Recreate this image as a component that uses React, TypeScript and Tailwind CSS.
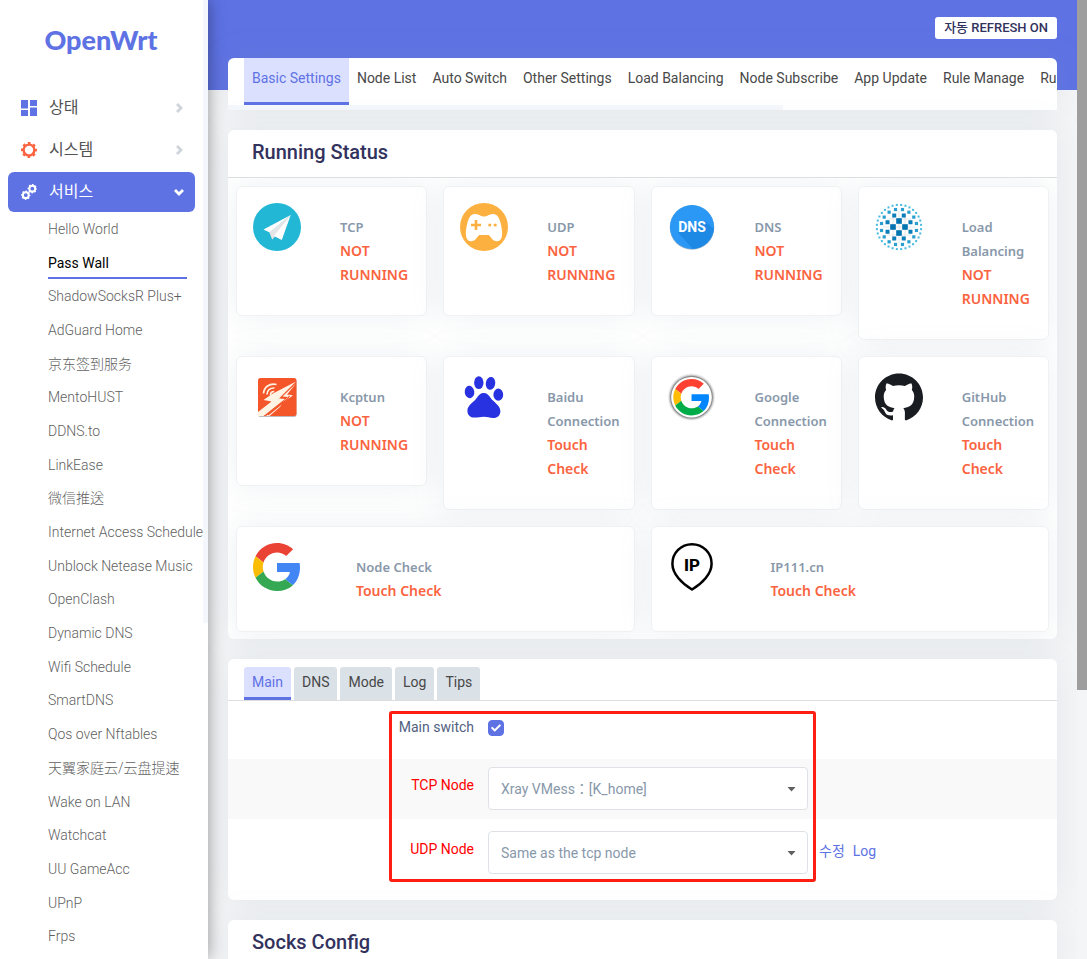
import { useState } from "react";
import type { ReactNode } from "react";
import clsx from "clsx";
import { FaCheck } from "react-icons/fa";
import { SiGithub } from "react-icons/si";

const services = [
  "Hello World",
  "Pass Wall",
  "ShadowSocksR Plus+",
  "AdGuard Home",
  "京东签到服务",
  "MentoHUST",
  "DDNS.to",
  "LinkEase",
  "微信推送",
  "Internet Access Schedule",
  "Unblock Netease Music",
  "OpenClash",
  "Dynamic DNS",
  "Wifi Schedule",
  "SmartDNS",
  "Qos over Nftables",
  "天翼家庭云/云盘提速",
  "Wake on LAN",
  "Watchcat",
  "UU GameAcc",
  "UPnP",
  "Frps",
];

const pages = [
  "Basic Settings",
  "Node List",
  "Auto Switch",
  "Other Settings",
  "Load Balancing",
  "Node Subscribe",
  "App Update",
  "Rule Manage",
  "Rule List",
];

const settingTabs = ["Main", "DNS", "Mode", "Log", "Tips"];

/* ---------- icons ---------- */

function DashboardIcon() {
  return (
    <svg width="16" height="16" viewBox="0 0 16 16" fill="#5e72e4">
      <path d="M0 0h7v8.500H0zM0 10h7v6H0zM9 0h7v6H9zM9 7.500h7V16H9z" />
    </svg>
  );
}

function GearIcon() {
  return (
    <svg width="16" height="16" viewBox="0 0 16 16" fill="none" stroke="#fb6340">
      <circle cx="8" cy="8" r="5.400" strokeWidth="2.400" />
      <circle cx="8" cy="8" r="7" strokeWidth="2" strokeDasharray="2.750 2.748" strokeDashoffset="1.370" />
    </svg>
  );
}

function CogsIcon() {
  return (
    <svg width="16" height="16" viewBox="0 0 16 16" fill="none" stroke="#fff">
      <circle cx="11.300" cy="4.700" r="2.900" strokeWidth="2" />
      <circle cx="11.300" cy="4.700" r="4" strokeWidth="1.400" strokeDasharray="1.570 1.571" strokeDashoffset=".780" />
      <circle cx="4.800" cy="11.200" r="2.900" strokeWidth="2" />
      <circle cx="4.800" cy="11.200" r="4" strokeWidth="1.400" strokeDasharray="1.570 1.571" strokeDashoffset=".780" />
    </svg>
  );
}

function Chevron({ down }: { down?: boolean }) {
  return (
    <svg
      width="10"
      height="10"
      viewBox="0 0 10 10"
      fill="none"
      stroke={down ? "#fff" : "#ced4da"}
      strokeWidth="2.800"
    >
      <path d={down ? "M1 3l4 4 4-4" : "M3 1l4 4-4 4"} />
    </svg>
  );
}

function TelegramIcon() {
  return (
    <svg width="48" height="48" viewBox="0 0 48 48">
      <circle cx="24" cy="24" r="24" fill="#23b7d6" />
      <path d="M37.700 12 16.500 29.500l2.700 7L22.500 33z" fill="#d3d6d8" />
      <path d="M37.700 12 10.500 26.500l6.200 3z" fill="#fff" />
      <path d="M37.700 12 16.700 29.500l2.600 6.800z" fill="#e3e5e7" />
      <path d="M37.700 12 21 33l7.800 4z" fill="#fff" />
    </svg>
  );
}

function GamepadIcon() {
  return (
    <svg width="48" height="48" viewBox="0 0 48 48">
      <circle cx="24" cy="24" r="24" fill="#fbb040" />
      <path
        d="M15.500 11C19 11 20.500 13.600 24 13.600S29 11 32.500 11c4 0 6.500 2.500 8 8.500 1.300 5 2 9.500 1.500 13.500-.5 3.500-2.500 5.200-5.200 5.200-4.300 0-5.300-3.700-8-6.200h-9.600c-2.700 2.500-3.700 6.200-8 6.200C8.500 38.200 6.500 36.500 6 33c-.5-4 .2-8.500 1.500-13.500 1.500-6 4-8.500 8-8.500z"
        fill="#fff"
      />
      <path d="M14.700 17h2.600v3.700H21v2.600h-3.700V27h-2.600v-3.700H11v-2.600h3.700z" fill="#fbb040" />
      <circle cx="29.800" cy="22" r="1.600" fill="#fbb040" />
      <circle cx="35.200" cy="22" r="1.600" fill="#fbb040" />
    </svg>
  );
}

function DnsIcon() {
  return (
    <svg width="48" height="48" viewBox="0 0 48 48">
      <circle cx="24" cy="24.500" r="22.300" fill="#9fb4c8" />
      <circle cx="24" cy="24" r="22" fill="#2a98f4" />
      <path d="M10 29.500 25 45.900A22 22 0 0 0 45.800 26L37 18z" fill="#1e88e5" />
      <text
        x="24"
        y="29"
        textAnchor="middle"
        fontFamily="Roboto, sans-serif"
        fontWeight="700"
        fontSize="14"
        fill="#fff"
      >
        DNS
      </text>
    </svg>
  );
}

const dotRings = [
  { count: 4, radius: 6, size: 5.6, turn: 0, color: "#0073b1" },
  { count: 8, radius: 12.4, size: 4, turn: 0.5, color: "#0a7dba" },
  { count: 16, radius: 17.8, size: 3.2, turn: 0.5, color: "#2a9fcf" },
  { count: 32, radius: 22.2, size: 2, turn: 0.5, color: "#43b9de" },
];

function BalanceIcon() {
  return (
    <svg width="48" height="48" viewBox="0 0 48 48">
      <path d="M8 24h32M24 8v32M12 16h24M12 32h24M18 10v28M30 10v28" stroke="#e3e6e9" strokeWidth="1" />
      {dotRings.map((ring) =>
        Array.from({ length: ring.count }, (_, i) => {
          const angle = ((i + ring.turn) / ring.count) * Math.PI * 2;
          return (
            <rect
              key={`${ring.count}-${i}`}
              x={24 + Math.cos(angle) * ring.radius - ring.size / 2}
              y={24 + Math.sin(angle) * ring.radius - ring.size / 2}
              width={ring.size}
              height={ring.size}
              fill={ring.color}
            />
          );
        }),
      )}
    </svg>
  );
}

function KcptunIcon() {
  return (
    <svg width="48" height="48" viewBox="0 0 48 48">
      <rect x="5" y="6" width="38.500" height="38" rx="2.500" fill="#b9bcc0" />
      <rect x="5" y="5" width="38.500" height="38" rx="2.500" fill="#f4562a" />
      <g fill="#fff3e3">
        <path d="M43 8.500 19 21l-8.500 6 8 1.500L5 39v4h5.500L32 26l-6-.5z" />
        <path d="M43 10.500 34 21.500l6 .8L13 43h3.500L27 34l4-6 4-4-5.500-.5z" />
      </g>
      <path d="M36.500 22.800 34.500 26 15 42" fill="none" stroke="#f4562a" strokeWidth="1.200" />
      <g fill="none" stroke="#fff3e3" strokeWidth="1.700">
        <path d="M10.500 20.500C11 14 16.500 10 23.500 11.500" />
        <path d="M14 21.500c0-4 3-6.800 7.500-6.500" />
        <path d="M17.500 22c0-2 1.500-3.500 3.700-3.500" />
      </g>
    </svg>
  );
}

function PawIcon() {
  return (
    <svg width="48" height="48" viewBox="0 0 48 48" fill="#2932e1">
      <ellipse cx="9.500" cy="19" rx="4.800" ry="6.200" transform="rotate(-8 9.500 19)" />
      <ellipse cx="18.800" cy="9.700" rx="4.700" ry="6.400" />
      <ellipse cx="30.500" cy="10.400" rx="4.700" ry="6.400" transform="rotate(10 30.500 10.400)" />
      <ellipse cx="38.300" cy="21.700" rx="4.900" ry="6.100" />
      <path d="M23.700 20c3.300 0 5 2 7 5 2.500 3.700 9.800 7.700 9.700 13.200-.1 4.300-3 6.900-7.400 6.800-3.500-.1-5.500-1.200-9.300-1.200-3.500 0-6 .9-9.500.8-4-.1-6.800-2.600-6.800-6.900 0-5.500 6.600-8.700 9.300-12.700 2-3 3.700-5 7-5z" />
    </svg>
  );
}

function GoogleMark({ vivid }: { vivid?: boolean }) {
  return (
    <>
      <path
        fill={vivid ? "#ff4131" : "#ea4335"}
        d="M24 9.500c3.540 0 6.710 1.220 9.210 3.600l6.850-6.850C35.900 2.380 30.470 0 24 0 14.620 0 6.510 5.380 2.560 13.220l7.980 6.190C12.430 13.720 17.740 9.500 24 9.500z"
      />
      <path
        fill={vivid ? "#0086ff" : "#4285f4"}
        d="M46.980 24.550c0-1.570-.15-3.090-.38-4.550H24v9.020h12.940c-.58 2.960-2.260 5.480-4.780 7.180l7.730 6c4.510-4.180 7.090-10.360 7.090-17.650z"
      />
      <path
        fill={vivid ? "#ffbd00" : "#fbbc05"}
        d="M10.530 28.590c-.48-1.450-.76-2.990-.76-4.590s.27-3.140.76-4.590l-7.980-6.190C.92 16.460 0 20.120 0 24c0 3.880.92 7.540 2.560 10.780l7.970-6.190z"
      />
      <path
        fill={vivid ? "#00ac47" : "#34a853"}
        d="M24 48c6.480 0 11.930-2.130 15.890-5.810l-7.730-6c-2.150 1.450-4.920 2.300-8.160 2.300-6.260 0-11.570-4.220-13.470-9.910l-7.980 6.190C6.510 42.620 14.620 48 24 48z"
      />
    </>
  );
}

function GoogleIcon() {
  return (
    <svg width="48" height="48" viewBox="0 0 48 48">
      <GoogleMark />
    </svg>
  );
}

function GoogleBadgeIcon() {
  return (
    <svg width="48" height="48" viewBox="0 0 48 48">
      <circle cx="23.500" cy="24" r="23.500" fill="#ececec" />
      <circle cx="23.500" cy="24.200" r="22.500" fill="#c9c9c9" />
      <circle cx="23.500" cy="24.200" r="21.400" fill="#8b8b8b" />
      <circle cx="23.500" cy="24.200" r="20.300" fill="#fff" />
      <g transform="translate(5.300 6) scale(.76)">
        <GoogleMark vivid />
      </g>
    </svg>
  );
}

function IpIcon() {
  return (
    <svg width="48" height="48" viewBox="0 0 48 48">
      <path
        d="M24 1.300c11 0 19.600 8.700 19.600 19.400C43.600 31 34 40.500 24 46.500 14 40.500 4.400 31 4.400 20.700 4.400 10 13 1.300 24 1.300z"
        fill="none"
        stroke="#000"
        strokeWidth="2.500"
      />
      <text
        x="24"
        y="28"
        textAnchor="middle"
        fontFamily="Roboto, sans-serif"
        fontWeight="800"
        fontSize="17"
        fill="#000"
      >
        IP
      </text>
    </svg>
  );
}

/* ---------- parts ---------- */

type Status = { name: string; state: string; icon: ReactNode; wide?: boolean };

const statuses: Status[] = [
  { name: "TCP", state: "NOT RUNNING", icon: <TelegramIcon /> },
  { name: "UDP", state: "NOT RUNNING", icon: <GamepadIcon /> },
  { name: "DNS", state: "NOT RUNNING", icon: <DnsIcon /> },
  { name: "Load Balancing", state: "NOT RUNNING", icon: <BalanceIcon /> },
  { name: "Kcptun", state: "NOT RUNNING", icon: <KcptunIcon /> },
  { name: "Baidu Connection", state: "Touch Check", icon: <PawIcon /> },
  { name: "Google Connection", state: "Touch Check", icon: <GoogleBadgeIcon /> },
  { name: "GitHub Connection", state: "Touch Check", icon: <SiGithub size={48} color="#191d21" /> },
  { name: "Node Check", state: "Touch Check", icon: <GoogleIcon />, wide: true },
  { name: "IP111.cn", state: "Touch Check", icon: <IpIcon />, wide: true },
];

function StatusCard({ name, state, icon, wide }: Status) {
  return (
    <div
      className={clsx(
        "flex items-start rounded-md border border-[#f0f1f2] bg-white p-4 shadow-[0_0_32px_rgba(136,152,170,0.15)]",
        wide ? "col-span-2 gap-[55px]" : "gap-[39px]",
      )}
    >
      <div className="shrink-0">{icon}</div>
      <div className="min-w-0 py-3 font-['Noto_Sans','Open_Sans',sans-serif] leading-6 font-semibold">
        <h4 className="text-[13px] leading-6 text-[#8898aa]">{name}</h4>
        <p className="text-sm leading-6 text-[#fb6340]">{state}</p>
      </div>
    </div>
  );
}

function Panel({ title, children }: { title?: string; children?: ReactNode }) {
  return (
    <section className="mb-5 rounded-md bg-white shadow-[0_0_32px_rgba(136,152,170,0.15)]">
      {title && (
        <h3 className="border-b border-[#dcdee0] px-6 pt-2 pb-[11px] text-xl leading-7 font-medium text-[#32325d]">
          {title}
        </h3>
      )}
      {children}
    </section>
  );
}

function NodeSelect({ id, options }: { id: string; options: string[] }) {
  return (
    <div className="relative w-80">
      <select
        id={id}
        className="h-[43px] w-full appearance-none rounded border border-[#dee2e6] bg-white px-3 text-sm text-[#8898aa]"
      >
        {options.map((option) => (
          <option key={option}>{option}</option>
        ))}
      </select>
      <svg
        className="pointer-events-none absolute top-5 right-3"
        width="9"
        height="5"
        viewBox="0 0 9 5"
        fill="#5f5f5f"
      >
        <path d="M.5 0h8l-4 4.500z" />
      </svg>
    </div>
  );
}

function Sidebar() {
  const [active, setActive] = useState("Pass Wall");

  return (
    <aside className="relative z-10 flex w-52 shrink-0 flex-col overflow-hidden bg-white pb-1.5 shadow-[0_0_16px_rgba(0,0,0,0.4)]">
      <a
        href="#"
        className="pt-5 pr-1.5 pb-7 text-center font-['Lato',sans-serif] text-[27px] leading-10 font-black text-[#5e72e4]"
      >
        OpenWrt
      </a>
      <nav className="flex min-h-0 flex-1 flex-col">
        <div className="mr-[13px] ml-2 flex flex-col gap-0.5 text-base text-[#525252]">
          <a href="#" className="flex h-10 items-center gap-3 pr-[11px] pl-[13px]">
            <DashboardIcon />
            <span className="flex-1">상태</span>
            <Chevron />
          </a>
          <a href="#" className="flex h-10 items-center gap-3 pr-[11px] pl-[13px]">
            <GearIcon />
            <span className="flex-1">시스템</span>
            <Chevron />
          </a>
          <a href="#" className="flex h-10 items-center gap-3 rounded-md bg-[#5e72e4] pr-[11px] pl-[13px] text-white">
            <CogsIcon />
            <span className="flex-1">서비스</span>
            <Chevron down />
          </a>
        </div>
        <ul className="mr-[21px] ml-12 flex min-h-0 flex-1 flex-col text-sm text-[#5f5f5f]">
          {services.map((name) => (
            <li key={name} className="min-h-0 flex-1">
              <a
                href="#"
                onClick={() => setActive(name)}
                className={clsx(
                  "flex h-full items-center whitespace-nowrap",
                  name === active
                    ? "text-black shadow-[inset_0_-2px_0_#5e72e4]"
                    : "font-light",
                )}
              >
                {name}
              </a>
            </li>
          ))}
        </ul>
      </nav>
      {/* scroll thumb */}
      <div className="absolute top-0 right-0 h-[65%] w-[5px] bg-[#f4f7fb]" />
    </aside>
  );
}

export default function App() {
  const [page, setPage] = useState("Basic Settings");
  const [tab, setTab] = useState("Main");
  const [enabled, setEnabled] = useState(true);

  return (
    <div className="flex h-screen overflow-hidden bg-[#f4f5f7] font-['Roboto','Noto_Sans_CJK_KR','Noto_Sans_CJK_SC',sans-serif]">
      <Sidebar />

      <main className="min-w-0 flex-1 overflow-hidden bg-[linear-gradient(#5e72e4_90px,#f4f5f7_90px)] px-5">
        <header className="flex h-[58px] items-start justify-end pt-[17px]">
          <button className="h-[22px] rounded-[3px] bg-white px-[9px] text-[13px] leading-[22px] font-medium text-[#32325d]">
            자동 REFRESH ON
          </button>
        </header>

        <nav className="mb-5 overflow-hidden rounded-t-md bg-white shadow-[0_0_32px_rgba(136,152,170,0.15)]">
          <div className="flex pl-4">
            {pages.map((name) => (
              <a
                key={name}
                href="#"
                onClick={() => setPage(name)}
                className={clsx(
                  "h-[47px] shrink-0 border-b-3 px-2 pt-2 text-sm leading-6 whitespace-nowrap",
                  name === page
                    ? "border-[#5e72e4] bg-[#dce0ff] text-[#5e72e4]"
                    : "border-transparent text-[#484848]",
                )}
              >
                {name}
              </a>
            ))}
          </div>
          <div className="h-[5px] w-[67%] bg-[#f4f7fb]" />
        </nav>

        <Panel title="Running Status">
          <div className="grid grid-cols-4 items-start gap-4 overflow-hidden rounded-b-md p-2 pb-[7px]">
            {statuses.map((status) => (
              <StatusCard key={status.name} {...status} />
            ))}
          </div>
        </Panel>

        <Panel>
          <div className="flex gap-[3px] border-b border-[#dcdee0] px-4 pt-2">
            {settingTabs.map((name) => (
              <button
                key={name}
                onClick={() => setTab(name)}
                className={clsx(
                  "h-[33px] rounded-t-[3px] border-b-3 px-2 text-sm leading-7",
                  name === tab
                    ? "border-[#5e72e4] bg-[#dce0ff] text-[#5e72e4]"
                    : "border-[#dae1e7] bg-[#dae1e7] text-[#484848]",
                )}
              >
                {name}
              </button>
            ))}
          </div>

          <form className="relative text-sm leading-6">
            <div className="flex h-[58px] gap-3.5 pt-2">
              <label htmlFor="main-switch" className="w-[246px] pt-1.5 text-right text-[#525f7f]">
                Main switch
              </label>
              <span className="relative mt-[11px] h-4 w-4">
                <input
                  id="main-switch"
                  type="checkbox"
                  checked={enabled}
                  onChange={() => setEnabled(!enabled)}
                  className="block h-4 w-4 appearance-none rounded border border-[#5e72e4] bg-white checked:bg-[#5e72e4]"
                />
                {enabled && <FaCheck size={10} className="pointer-events-none absolute inset-[3px] text-white" />}
              </span>
            </div>
            <div className="flex h-[60px] gap-3.5 bg-[#f9f9f9] pt-2">
              <label htmlFor="tcp-node" className="w-[246px] pt-1.5 text-right text-[#ff0000]">
                TCP Node
              </label>
              <NodeSelect id="tcp-node" options={["Xray VMess：[K_home]"]} />
            </div>
            <div className="flex gap-3.5 pt-3 pb-[26px]">
              <label htmlFor="udp-node" className="w-[246px] pt-1.5 text-right text-[#ff0000]">
                UDP Node
              </label>
              <NodeSelect id="udp-node" options={["Same as the tcp node"]} />
              <div className="-ml-[3px] flex gap-2 pt-2 text-[#5e72e4]">
                <a href="#">수정</a>
                <a href="#">Log</a>
              </div>
            </div>

            {/* highlight frame over the node settings */}
            <div className="pointer-events-none absolute top-2.5 left-[161px] h-[171px] w-[427px] rounded-[3px] border-3 border-[#ff1f12]" />
          </form>
        </Panel>

        <Panel title="Socks Config" />
      </main>

      {/* page scrollbar */}
      <div className="w-2.5 shrink-0">
        <div className="h-[72%] bg-[#9e9e9e]" />
      </div>
    </div>
  );
}
